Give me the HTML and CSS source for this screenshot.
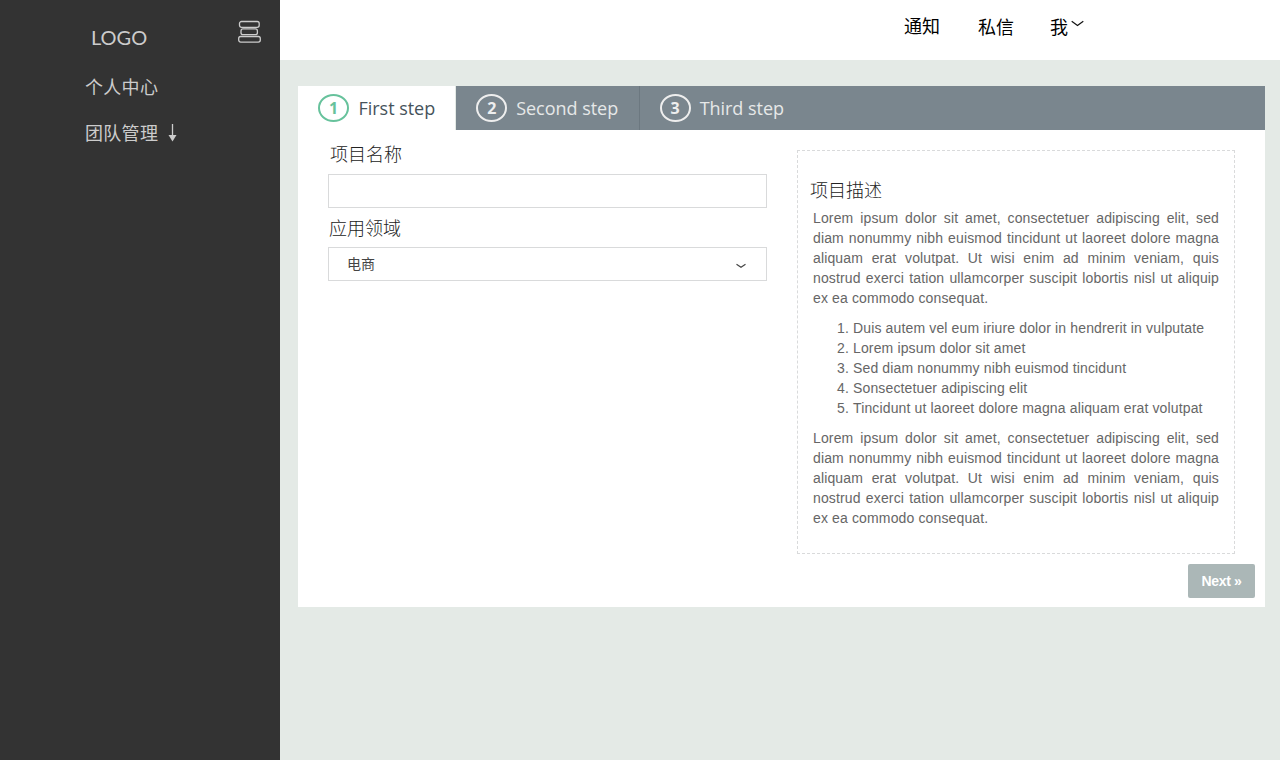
FILE: index.html
```html
<!DOCTYPE html>
<html lang="zh-CN">
<head>
<meta charset="utf-8">
<title>项目</title>
<link rel="stylesheet" href="styles.css">
</head>
<body>
<div class="app">
  <aside class="sidebar">
    <div class="brand">
      <span class="logo">LOGO</span>
      <svg class="menu-icon" width="24" height="23" viewBox="0 0 24 23" fill="none" stroke="#ccc" stroke-width="1.3">
        <rect x="1.5" y="1.5" width="19.7" height="5.8" rx="2"/>
        <rect x="3" y="8.9" width="16.4" height="5.8" rx="2"/>
        <rect x="0.7" y="16.5" width="21.6" height="5.6" rx="2"/>
      </svg>
    </div>
    <nav class="side-nav">
      <a class="side-link">个人中心</a>
      <a class="side-link">团队管理
        <svg width="9" height="18" viewBox="0 0 9 18"><path d="M4.5 0V12" stroke="#ccc" stroke-width="1.3"/><path d="M.5 11H8.5L4.5 17.5Z" fill="#ccc"/></svg>
      </a>
    </nav>
  </aside>
  <div class="content">
    <header class="topbar">
      <a class="top-link notice">通知</a>
      <a class="top-link message">私信</a>
      <a class="top-link me">我<svg width="13" height="7" viewBox="0 0 13 7" fill="none" stroke="#111" stroke-width="1.2"><path d="M.7 1.2L6.5 5.5L12.3 1.2"/></svg></a>
    </header>
    <main class="wizard">
      <ul class="steps">
        <li class="step active"><span class="number">1</span>First step</li>
        <li class="step"><span class="number">2</span>Second step</li>
        <li class="step"><span class="number">3</span>Third step</li>
      </ul>
      <div class="panels">
        <form class="form">
          <label class="label">项目名称</label>
          <div class="field"></div>
          <label class="label second">应用领域</label>
          <div class="field select"><span class="value">电商</span>
            <svg width="10" height="6" viewBox="0 0 10 6" fill="none" stroke="#444" stroke-width="1.2"><path d="M.5 1.2L5 4.2L9.5 1.2"/></svg>
          </div>
        </form>
        <section class="description">
          <h2 class="label title">项目描述</h2>
          <p class="text">Lorem ipsum dolor sit amet, consectetuer adipiscing elit, sed diam nonummy nibh euismod tincidunt ut laoreet dolore magna aliquam erat volutpat. Ut wisi enim ad minim veniam, quis nostrud exerci tation ullamcorper suscipit lobortis nisl ut aliquip ex ea commodo consequat.</p>
          <ol class="list">
            <li>Duis autem vel eum iriure dolor in hendrerit in vulputate</li>
            <li>Lorem ipsum dolor sit amet</li>
            <li>Sed diam nonummy nibh euismod tincidunt</li>
            <li>Sonsectetuer adipiscing elit</li>
            <li>Tincidunt ut laoreet dolore magna aliquam erat volutpat</li>
          </ol>
          <p class="text">Lorem ipsum dolor sit amet, consectetuer adipiscing elit, sed diam nonummy nibh euismod tincidunt ut laoreet dolore magna aliquam erat volutpat. Ut wisi enim ad minim veniam, quis nostrud exerci tation ullamcorper suscipit lobortis nisl ut aliquip ex ea commodo consequat.</p>
        </section>
      </div>
      <div class="actions"><button class="next">Next »</button></div>
    </main>
  </div>
</div>
</body>
</html>
```
FILE: styles.css
```css
* { box-sizing: border-box; }
body { margin: 0; font-family: "Liberation Sans", "Noto Sans CJK SC", sans-serif; }
.app { display: flex; height: 760px; background: #e4eae6; overflow: hidden; }
.sidebar { width: 280px; flex: none; background: #333; color: #ccc; }
.brand { display: flex; justify-content: space-between; height: 64px; padding: 20px 18px 0 91px; }
.logo { font: 20px/24px Lato, sans-serif; letter-spacing: 0; margin-top: 5px; }
.menu-icon { display: block; }
.side-nav { display: flex; flex-direction: column; padding: 8px 0 0 85px; }
.side-link { display: flex; align-items: center; gap: 10px; height: 28px; margin-bottom: 18px; font: 18px/28px "Noto Sans CJK SC", sans-serif; letter-spacing: 0.3px; }
.side-link svg { margin-top: 2px; }
.content { flex: 1; min-width: 0; }
.topbar { display: flex; height: 60px; padding: 12px 0 0 624px; background: #fff; }
.top-link { font: 18px/26px "Noto Sans CJK SC", sans-serif; color: #000; }
.notice { width: 74px; }
.message { width: 72px; padding-top: 1px; }
.me { display: flex; gap: 3px; padding-top: 1px; }
.me svg { margin-top: 7px; }
.wizard { margin: 26px 15px 0 18px; height: 521px; background: #fff; }
.steps { display: flex; height: 44px; margin: 0; padding: 0; list-style: none; background: #7a868e; }
.step { display: flex; align-items: center; padding: 0 20.5px 0 20px; color: #e6e8e8; font: 18px/42px "Open Sans", sans-serif; letter-spacing: -0.03px; border-right: 1px solid #6c7880; }
.step:last-child { border-right: 0; }
.step.active { background: #fff; color: #46535b; border-right-color: #e4eae6; }
.number { width: 31px; height: 28px; margin-right: 9.5px; border: 2px solid #eee; border-radius: 50%; color: #eee; font-size: 16px; font-weight: 700; line-height: 25px; text-align: center; }
.step:not(.active) .number { margin-right: 9px; }
.step.active { padding-right: 20px; }
.active .number { color: #67c29c; border-color: #67c29c; }
.panels { display: flex; gap: 30px; padding: 10px 30px 0; }
.form { width: 439px; }
.label { display: block; margin: 0; padding-left: 2px; height: 34px; font: 300 18px/26px "Noto Sans CJK SC", sans-serif; color: #222; }
.label.second { padding: 6px 0 0 1px; height: 39px; }
.field { height: 34px; border: 1px solid #d9dadb; }
.select { display: flex; align-items: center; justify-content: space-between; padding: 0 20px 0 18px; font: 14px/30px "Noto Sans CJK SC", sans-serif; color: #444; }
.value { height: 32px; }
.select svg { margin-top: 4px; }
.description { width: 438px; height: 404px; margin-top: 10px; padding: 25px 15px 0; border: 1px dashed #d9dadb; color: #666; font-size: 14px; line-height: 20px; letter-spacing: 0.14px; }
.title { height: 32px; padding: 0; margin-left: -3px; letter-spacing: 0; }
.text { margin: 0 0 10px; text-align: justify; }
.list { margin: 0 0 10px; padding-left: 40px; }
.actions { display: flex; justify-content: flex-end; padding: 10px 10px 0; }
.next { width: 67px; height: 34px; padding: 0; border: 0; border-radius: 2px; background: #abb7b7; color: #fff; font: bold 14px/20px "Liberation Sans", sans-serif; letter-spacing: -0.3px; }
```
